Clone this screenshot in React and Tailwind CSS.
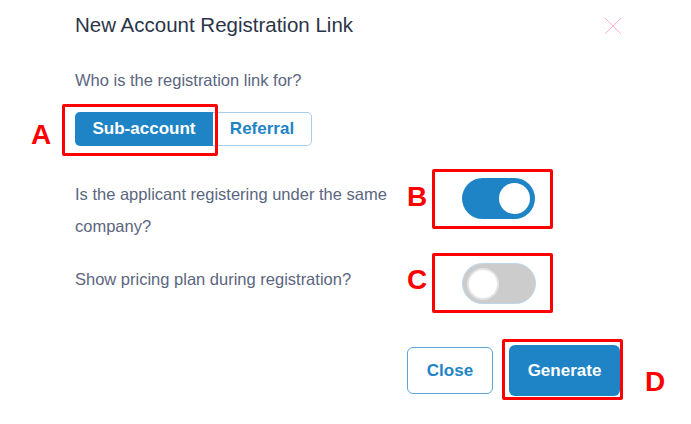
import { X } from 'lucide-react'

function Toggle({ on }) {
  return (
    <div
      className={
        on
          ? 'w-[73px] h-[41px] rounded-full bg-[#1e84c6] flex items-center justify-end pr-[5px]'
          : 'w-[74px] h-[41px] rounded-full bg-[#cccccc] border border-[#b9d8ef] flex items-center justify-start pl-[4px]'
      }
    >
      <div
        className={
          on
            ? 'w-[31px] h-[31px] rounded-full bg-white'
            : 'w-[32px] h-[32px] rounded-full bg-white border-2 border-[#e4e4e4]'
        }
      />
    </div>
  )
}

function Mark({ children, className }) {
  return (
    <span className={'absolute text-[28px] leading-none font-bold text-[#ff0000] ' + className}>
      {children}
    </span>
  )
}

export default function App() {
  return (
    <div className="relative w-[691px] h-[424px] bg-white font-['Liberation_Sans',Arial,sans-serif]">
      <div className="pl-[75px] pr-[71px] pt-[13px]">
        <div className="flex items-start justify-between h-[24px]">
          <h1 className="text-[20.5px] leading-[24px] text-[#2b3447]">New Account Registration Link</h1>
          <X size={30} strokeWidth={0.8} className="-mt-[2px] -mr-[8px] text-[#ffb0c6]" />
        </div>

        <p className="mt-[33px] text-[16.5px] leading-[20px] text-[#5b6680]">Who is the registration link for?</p>

        <div className="mt-[22px] flex">
          <button className="w-[138px] h-[34px] rounded-l-[5px] bg-[#1e84c6] text-white text-[17px] font-bold">
            Sub-account
          </button>
          <button className="w-[99px] h-[34px] rounded-r-[5px] border border-l-0 border-[#a8cdea] text-[#1e84c6] text-[17px] font-bold">
            Referral
          </button>
        </div>

        <div className="mt-[32px] flex items-start">
          <p className="w-[330px] text-[16.5px] leading-[32px] text-[#5b6680]">
            Is the applicant registering under the same company?
          </p>
          <div className="ml-[57px]">
            <Toggle on />
          </div>
        </div>

        <div className="mt-[21px] flex items-start">
          <p className="w-[330px] text-[16.5px] leading-[32px] text-[#5b6680]">
            Show pricing plan during registration?
          </p>
          <div className="ml-[57px]">
            <Toggle />
          </div>
        </div>

        <div className="mt-[41px] flex justify-end items-center gap-[16px]">
          <button className="w-[86px] h-[47px] rounded-[6px] border border-[#5aa6dc] text-[#1e84c6] text-[17px] font-bold">
            Close
          </button>
          <button className="w-[111px] h-[51px] rounded-[6px] bg-[#1e84c6] text-white text-[17px] font-bold">
            Generate
          </button>
        </div>
      </div>

      <div className="absolute left-[62px] top-[104px] w-[156px] h-[52px] border-[3px] border-[#ff0000] rounded-[2px]" />
      <div className="absolute left-[432px] top-[169px] w-[121px] h-[60px] border-[3px] border-[#ff0000] rounded-[2px]" />
      <div className="absolute left-[432px] top-[253px] w-[121px] h-[60px] border-[3px] border-[#ff0000] rounded-[2px]" />
      <div className="absolute left-[502px] top-[339px] w-[121px] h-[61px] border-[3px] border-[#ff0000] rounded-[2px]" />

      <Mark className="left-[31px] top-[121px]">A</Mark>
      <Mark className="left-[407px] top-[183px]">B</Mark>
      <Mark className="left-[407px] top-[266px]">C</Mark>
      <Mark className="left-[645px] top-[368px]">D</Mark>
    </div>
  )
}
